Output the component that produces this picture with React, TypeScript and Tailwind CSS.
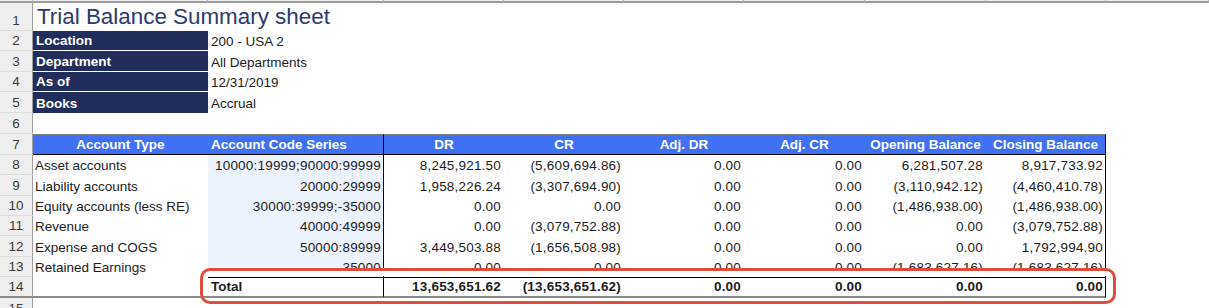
import React from "react";

const COLS =
  "grid grid-cols-[33px_175px_176px_120px_120px_120px_121px_121px_120px_1fr]";

const CELL =
  "flex items-end leading-[16px] pb-[1px] overflow-hidden whitespace-nowrap";

function RowHead({ n, className = "" }: { n: number; className?: string }) {
  return (
    <div
      className={
        "flex items-end justify-center leading-[16px] pb-[1px] bg-[#efefef] border-r border-r-[#9e9e9e] text-[#3a3a3a] " +
        className
      }
    >
      {n}
    </div>
  );
}

type Row = [string, string, string, string, string, string, string, string];

const data: Row[] = [
  ["Asset accounts", "10000:19999;90000:99999", "8,245,921.50", "(5,609,694.86)", "0.00", "0.00", "6,281,507.28", "8,917,733.92"],
  ["Liability accounts", "20000:29999", "1,958,226.24", "(3,307,694.90)", "0.00", "0.00", "(3,110,942.12)", "(4,460,410.78)"],
  ["Equity accounts (less RE)", "30000:39999;-35000", "0.00", "0.00", "0.00", "0.00", "(1,486,938.00)", "(1,486,938.00)"],
  ["Revenue", "40000:49999", "0.00", "(3,079,752.88)", "0.00", "0.00", "0.00", "(3,079,752.88)"],
  ["Expense and COGS", "50000:89999", "3,449,503.88", "(1,656,508.98)", "0.00", "0.00", "0.00", "1,792,994.90"],
  ["Retained Earnings", "35000", "0.00", "0.00", "0.00", "0.00", "(1,683,627.16)", "(1,683,627.16)"],
];

const heights = ["h-[20px]", "h-[21px]", "h-[20px]", "h-[20px]", "h-[21px]", "h-[20px]"];

const info: [string, string, string, string][] = [
  ["Location", "200 - USA 2", "h-[20px]", "border-b border-b-white"],
  ["Department", "All Departments", "h-[21px]", "border-b border-b-white"],
  ["As of", "12/31/2019", "h-[20px]", "border-b border-b-white"],
  ["Books", "Accrual", "h-[21px]", ""],
];

export default function App() {
  return (
    <div className="relative w-[1209px] h-[308px] overflow-hidden bg-white font-['Liberation_Sans',Arial,sans-serif] text-[13.5px] text-[#1c1c1c]">
      {/* column header strip */}
      <div className={COLS + " h-[3px]"}>
        {Array.from({ length: 10 }).map((_, i) => (
          <div
            key={i}
            className="bg-[#efefef] border-r border-r-[#b5b5b5] border-b-2 border-b-[#9c9c9c]"
          />
        ))}
      </div>

      {/* row 1 title */}
      <div className={COLS + " h-[28px]"}>
        <RowHead n={1} className="border-b border-b-[#dcdcdc]" />
        <div className="col-span-9 flex items-end leading-[25px] pb-[2px] pl-[4px] text-[22.4px] text-[#2c3a6e] whitespace-nowrap">
          Trial Balance Summary sheet
        </div>
      </div>

      {/* rows 2-5 */}
      {info.map(([label, value, h, b], i) => (
        <div key={label} className={COLS + " " + h}>
          <RowHead n={i + 2} className="border-b border-b-[#dcdcdc]" />
          <div className={CELL + " " + b + " bg-[#212e5c] text-white font-bold pl-[3px]"}>
            {label}
          </div>
          <div className={CELL + " pl-[3px] col-span-2"}>{value}</div>
        </div>
      ))}

      {/* row 6 */}
      <div className={COLS + " h-[21px]"}>
        <RowHead n={6} className="border-b border-b-[#dcdcdc]" />
      </div>

      {/* row 7 header */}
      <div className={COLS + " h-[21px]"}>
        <RowHead n={7} className="border-b border-b-[#dcdcdc]" />
        <div className={CELL + " justify-center bg-[#4070f4] text-white font-bold border-t border-t-[#808080] border-b border-b-black"}>
          Account Type
        </div>
        <div className={CELL + " pl-[3px] bg-[#4070f4] text-white font-bold border-t border-t-[#808080] border-b border-b-black border-r border-r-black"}>
          Account Code Series
        </div>
        {["DR", "CR", "Adj. DR", "Adj. CR", "Opening Balance"].map((t) => (
          <div
            key={t}
            className={CELL + " justify-center bg-[#4070f4] text-white font-bold border-t border-t-[#808080] border-b border-b-black"}
          >
            {t}
          </div>
        ))}
        <div className={CELL + " justify-center bg-[#4070f4] text-white font-bold border-t border-t-[#808080] border-b border-b-black border-r border-r-black"}>
          Closing Balance
        </div>
      </div>

      {/* rows 8-13 */}
      {data.map((r, i) => (
        <div key={r[0]} className={COLS + " " + heights[i]}>
          <RowHead n={i + 8} className="border-b border-b-[#dcdcdc]" />
          <div className={CELL + " pl-[2px]"}>{r[0]}</div>
          <div className={CELL + " justify-end pr-[2px] bg-[#edf3fc] border-r border-r-black tracking-[0.2px]"}>
            {r[1]}
          </div>
          {r.slice(2, 7).map((v, j) => (
            <div key={j} className={CELL + " justify-end pr-[3px] tracking-[0.2px]"}>
              {v}
            </div>
          ))}
          <div className={CELL + " justify-end pr-[2px] border-r border-r-black tracking-[0.2px]"}>
            {r[7]}
          </div>
        </div>
      ))}

      {/* row 14 total */}
      <div className={COLS + " h-[21px]"}>
        <RowHead n={14} className="border-b-2 border-b-[#8a8a8a]" />
        <div className="border-b-2 border-b-[#8a8a8a]" />
        <div className={CELL + " pl-[3px] font-bold border-t border-t-black border-b-2 border-b-[#8a8a8a] border-r border-r-black"}>
          Total
        </div>
        {["13,653,651.62", "(13,653,651.62)", "0.00", "0.00", "0.00"].map((v, j) => (
          <div
            key={j}
            className={CELL + " justify-end pr-[3px] font-bold tracking-[0.2px] border-t border-t-black border-b-2 border-b-[#8a8a8a]"}
          >
            {v}
          </div>
        ))}
        <div className={CELL + " justify-end pr-[2px] font-bold tracking-[0.2px] border-t border-t-black border-b-2 border-b-[#8a8a8a] border-r border-r-black"}>
          0.00
        </div>
      </div>

      {/* row 15 */}
      <div className={COLS + " h-[20px]"}>
        <RowHead n={15} />
      </div>

      {/* annotation */}
      <div className="absolute left-[203px] top-[271px] w-[910px] h-[5px] bg-white" />
      <div className="absolute left-[200px] top-[268px] w-[916px] h-[36px] border-[3px] border-[#de4e3c] rounded-[10px]" />
    </div>
  );
}
